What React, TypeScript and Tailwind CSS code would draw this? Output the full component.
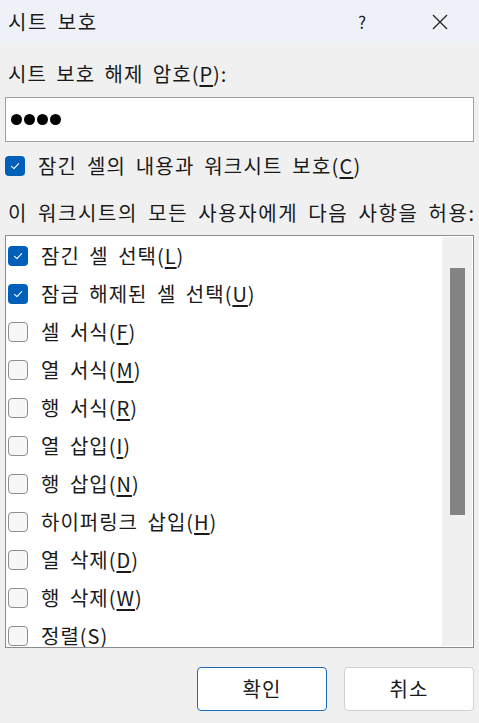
import React from "react";

const font = { fontFamily: '"Noto Sans CJK KR", "Noto Sans", sans-serif' };

function Box({ checked }: { checked: boolean }) {
  return checked ? (
    <span className="flex h-[20px] w-[20px] shrink-0 items-center justify-center rounded-[4px] bg-[#005fb8]">
      <svg width="12" height="12" viewBox="0 0 12 12" fill="none">
        <path d="M2.5 6.3 L5 8.6 L9.6 3.6" stroke="white" strokeWidth="1.1" strokeLinecap="round" strokeLinejoin="round" />
      </svg>
    </span>
  ) : (
    <span className="h-[20px] w-[20px] shrink-0 rounded-[4px] border border-[#8d8d8d] bg-[#f7f7f7]" />
  );
}

function Label({ text, k }: { text: string; k: string }) {
  return (
    <span>
      {text}(<span className="underline underline-offset-[3px]">{k}</span>)
    </span>
  );
}

const items = [
  { t: "잠긴 셀 선택", k: "L", c: true },
  { t: "잠금 해제된 셀 선택", k: "U", c: true },
  { t: "셀 서식", k: "F", c: false },
  { t: "열 서식", k: "M", c: false },
  { t: "행 서식", k: "R", c: false },
  { t: "열 삽입", k: "I", c: false },
  { t: "행 삽입", k: "N", c: false },
  { t: "하이퍼링크 삽입", k: "H", c: false },
  { t: "열 삭제", k: "D", c: false },
  { t: "행 삭제", k: "W", c: false },
  { t: "정렬", k: "S", c: false },
];

export default function App() {
  return (
    <div className="flex h-[723px] w-[479px] flex-col overflow-hidden bg-[#f0f0f0] text-[#1a1a1a] tracking-[1px] [word-spacing:4px]" style={font}>
      {/* 제목 표시줄 */}
      <div className="flex h-[43px] shrink-0 items-center bg-[#eef2f8] pl-[8px]">
        <span className="text-[20px] tracking-[1.5px]">시트 보호</span>
        <span className="ml-auto mr-[64px] text-[17px]">?</span>
        <svg width="18" height="18" viewBox="0 0 18 18" className="mr-[30px]">
          <path d="M2 2 L16 16 M16 2 L2 16" stroke="#222" strokeWidth="1.3" />
        </svg>
      </div>

      <div className="flex flex-1 flex-col px-[5px]">
        <div className="mt-[17px] pl-[3px] text-[20px] leading-[28px]">
          <Label text="시트 보호 해제 암호" k="P" />:
        </div>
        <div className="mt-[9px] flex h-[45px] items-center gap-[2px] border border-[#a0a0a0] bg-white pl-[5px]">
          <span className="h-[11px] w-[11px] rounded-full bg-black" />
          <span className="h-[11px] w-[11px] rounded-full bg-black" />
          <span className="h-[11px] w-[11px] rounded-full bg-black" />
          <span className="h-[11px] w-[11px] rounded-full bg-black" />
        </div>

        <div className="mt-[10px] flex items-center gap-[13px] text-[20px] leading-[28px] tracking-[1.2px]">
          <Box checked />
          <Label text="잠긴 셀의 내용과 워크시트 보호" k="C" />
        </div>

        <div className="mt-[19px] pl-[3px] text-[20px] leading-[28px] whitespace-nowrap tracking-[1.6px]">
          이 워크시트의 모든 사용자에게 다음 사항을 허용:
        </div>

        <div className="mt-[8px] flex h-[413px] border border-[#8c8c8c] bg-white">
          <div className="flex flex-1 flex-col overflow-hidden pt-[1px]">
            {items.map((it) => (
              <div key={it.t} className="flex h-[38px] shrink-0 items-center gap-[13px] pl-[2px] text-[20px]">
                <Box checked={it.c} />
                <Label text={it.t} k={it.k} />
              </div>
            ))}
          </div>
          <div className="my-[1px] mr-[1px] flex w-[30px] justify-center bg-[#f0f0f0] pt-[31px]">
            <div className="h-[247px] w-[15px] bg-[#838383]" />
          </div>
        </div>

        <div className="mt-[19px] flex justify-end gap-[17px]">
          <button className="h-[44px] w-[130px] rounded-[4px] border border-[#1b6ab8] bg-white text-[20px]">확인</button>
          <button className="h-[44px] w-[130px] rounded-[4px] border border-[#d0d0d0] bg-white text-[20px]">취소</button>
        </div>
      </div>
    </div>
  );
}
